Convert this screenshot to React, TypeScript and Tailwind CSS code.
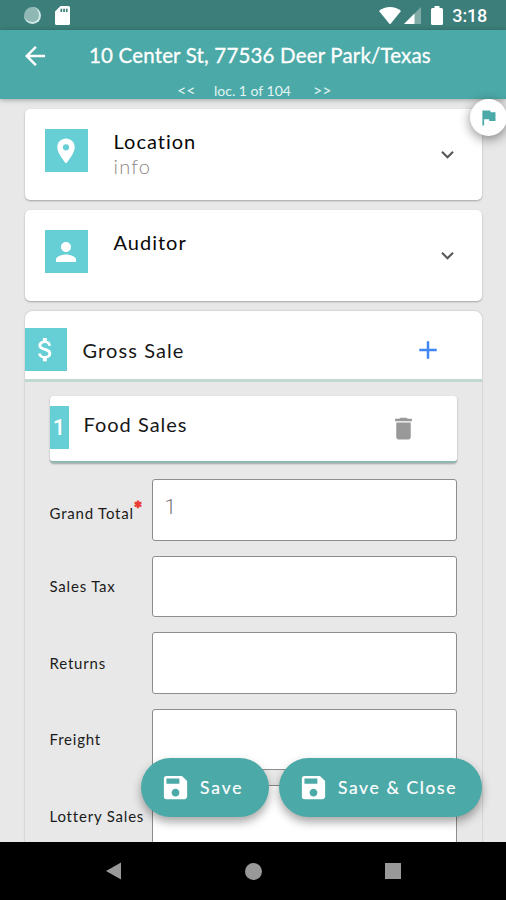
import React from "react";
import {
  MdAdd,
  MdArrowBack,
  MdAttachMoney,
  MdDelete,
  MdExpandMore,
  MdFlag,
  MdLocationOn,
  MdPerson,
  MdSave,
} from "react-icons/md";

function StatusBar() {
  return (
    <div className="flex h-[30px] shrink-0 items-center bg-[#3c7e79] pl-[24px] pr-[19px] text-white">
      <div className="h-[17px] w-[17px] rounded-full border-r-2 border-b-2 border-[#cfe9e8] bg-[#8fb7b4]" />
      <svg className="ml-[14px] h-[19px] w-[15px]" viewBox="0 0 15 19" fill="currentColor">
        <path
          fillRule="evenodd"
          d="M5.5 0H13.5A1.5 1.5 0 0 1 15 1.500V17.500A1.500 1.500 0 0 1 13.500 19H1.500A1.500 1.500 0 0 1 0 17.500V5.500ZM5.500 2.800V6H7.200V2.800ZM8.200 2.800V6H9.900V2.800ZM10.900 2.800V6H12.600V2.800Z"
        />
      </svg>
      <div className="flex-1" />
      <svg className="h-[17px] w-[22px]" viewBox="0 0 22 17" fill="currentColor">
        <path d="M0 4C6-1.300 16-1.300 22 4L11 17.500Z" />
      </svg>
      <svg className="ml-[3px] h-[17px] w-[17px]" viewBox="0 0 17 17" fill="currentColor">
        <path d="M17 0V17H0Z" opacity=".35" />
        <path d="M10.500 6.500V17H0Z" />
      </svg>
      <svg className="ml-[10px] h-[19px] w-[12px]" viewBox="0 0 12 19" fill="currentColor">
        <path d="M3.500 0H8.500V2H10.500Q12 2 12 3.500V17.500Q12 19 10.500 19H1.500Q0 19 0 17.500V3.500Q0 2 1.500 2H3.500Z" />
      </svg>
      <span className="ml-[9px] pt-px font-['Roboto',sans-serif] text-[18px] leading-none font-medium tracking-[-0.2px]">
        3:18
      </span>
    </div>
  );
}

function Header() {
  return (
    <header className="relative z-10 flex h-[69px] shrink-0 flex-col bg-[#4ba9a7] text-white shadow-[0_1px_5px_rgba(0,0,0,0.3)]">
      <div className="flex h-[51px] items-center pl-[20px]">
        <MdArrowBack className="h-[30px] w-[30px]" />
        <h1 className="ml-[39px] text-[20.500px] whitespace-nowrap tracking-[0.170px] [-webkit-text-stroke:0.3px_white]">
          10 Center St, 77536 Deer Park/Texas
        </h1>
      </div>
      <div className="flex h-[18px] items-center pl-[177px] text-[14px] leading-none whitespace-nowrap text-[#e2f5f4]">
        <span className="w-[37px] text-[16px]">&lt;&lt;</span>
        <span className="w-[99px] pt-px">loc. 1 of 104</span>
        <span className="text-[16px]">&gt;&gt;</span>
      </div>
      <button className="absolute top-[69px] left-[470px] flex h-[37px] w-[37px] items-center justify-center rounded-full bg-white text-[#4ba9a7] shadow-[0_3px_12px_rgba(0,0,0,0.45)]">
        <MdFlag className="mr-[1px] h-[21px] w-[21px]" />
      </button>
    </header>
  );
}

function SectionCard({ icon, title, subtitle }: { icon: React.ReactNode; title: string; subtitle?: string }) {
  return (
    <section className="flex h-[91px] shrink-0 rounded-[5px] bg-white pl-[20px] shadow-[0_1px_2px_rgba(0,0,0,0.3)]">
      <div className="mt-[20.500px] flex h-[43px] w-[43px] items-center justify-center bg-[#66ced5] text-white">{icon}</div>
      <div className="mt-[20px] ml-[26px] flex-1">
        <h2 className="text-[20px] leading-[25px] tracking-[1px] text-[#080808]">{title}</h2>
        {subtitle && <p className="text-[20px] leading-[24px] font-light tracking-[1.200px] text-[#8d8585]">{subtitle}</p>}
      </div>
      <MdExpandMore className="mt-[33px] mr-[22px] h-[25px] w-[25px] text-[#585858]" />
    </section>
  );
}

function Field({ label, value = "", required = false }: { label: string; value?: string; required?: boolean }) {
  return (
    <div className="flex h-[61.500px] shrink-0 items-center">
      <label
        className={`flex w-[102px] shrink-0 text-[15px] whitespace-nowrap tracking-[0.8px] text-[#1b1b1b] ${required ? "pt-[7px]" : ""}`}
      >
        {label}
        {required && (
          <span className="mt-[-4px] h-[12px] text-[19px] leading-none font-black text-[#ee3b35] [-webkit-text-stroke:1px_#ee3b35]">
            *
          </span>
        )}
      </label>
      <input
        defaultValue={value}
        className="h-full w-[306px] rounded-[3px] border border-[#8d8d8d] bg-white px-[12px] pb-[6px] font-['Roboto',sans-serif] text-[21px] font-light text-[#777]"
      />
    </div>
  );
}

function ActionButton({ label, className }: { label: string; className: string }) {
  return (
    <button
      className={`flex h-[59px] items-center rounded-full bg-[#4ba9a7] pl-[19px] text-[17.500px] whitespace-nowrap text-white shadow-[0_5px_10px_rgba(0,0,0,0.35)] [-webkit-text-stroke:0.2px_white] ${className}`}
    >
      <MdSave className="mr-[9px] h-[31px] w-[31px]" stroke="none" />
      <span className="pt-px">{label}</span>
    </button>
  );
}

function SystemNav() {
  return (
    <nav className="relative z-20 flex h-[58px] shrink-0 items-center bg-black pl-[106px] text-[#999]">
      <svg className="h-[18px] w-[15px]" viewBox="0 0 15 18" fill="currentColor">
        <path d="M15 .5V17.500L0 9Z" />
      </svg>
      <div className="ml-[124px] h-[17px] w-[17px] rounded-full bg-[#999]" />
      <div className="ml-[123px] h-[16px] w-[16px] bg-[#999]" />
    </nav>
  );
}

export default function App() {
  return (
    <div className="relative flex h-[900px] w-[506px] flex-col overflow-hidden bg-[#e8e8e8] font-['Lato',sans-serif]">
      <StatusBar />
      <Header />
      <main className="flex min-h-0 flex-1 flex-col gap-[10px] overflow-hidden px-[24.500px] pt-[9.500px]">
        <SectionCard icon={<MdLocationOn className="h-[30px] w-[30px]" />} title="Location" subtitle="info" />
        <SectionCard icon={<MdPerson className="h-[30px] w-[30px]" />} title="Auditor" />
        <section className="h-[600px] shrink-0 rounded-[8px] shadow-[0_0_2px_rgba(0,0,0,0.28)]">
          <div className="flex h-[71px] items-center rounded-t-[8px] border-b-[3px] border-[#c1d8d2] bg-white pt-[10px]">
            <div className="flex h-[43px] w-[42px] items-center justify-center bg-[#66ced5] text-white">
              <MdAttachMoney className="h-[31px] w-[31px]" />
            </div>
            <h2 className="ml-[16px] flex-1 text-[20px] tracking-[1.100px] text-[#181818]">Gross Sale</h2>
            <MdAdd className="mr-[39px] h-[30px] w-[30px] text-[#4285f4]" />
          </div>
          <div className="flex flex-col gap-[15px] px-[25px] pt-[14px]">
            <div className="mb-[1.500px] flex h-[67px] shrink-0 rounded-[4px] border-b-2 border-[#8db9b1] bg-white shadow-[0_1px_2px_rgba(0,0,0,0.3)]">
              <div className="mt-[10px] flex h-[43px] w-[19px] items-center justify-center bg-[#66ced5] font-['Roboto',sans-serif] text-[22px] font-medium text-white">
                1
              </div>
              <h3 className="mt-[14px] ml-[15px] flex-1 text-[20px] leading-[28px] tracking-[1px] text-[#181818]">
                Food Sales
              </h3>
              <MdDelete className="mt-[18px] mr-[39px] h-[29px] w-[29px] text-[#999]" />
            </div>
            <Field label="Grand Total" value="1" required />
            <Field label="Sales Tax" />
            <Field label="Returns" />
            <Field label="Freight" />
            <Field label="Lottery Sales" />
          </div>
        </section>
      </main>
      <div className="absolute top-[758px] left-[141px] z-10 flex gap-[10px]">
        <ActionButton label="Save" className="w-[128px] tracking-[1.900px]" />
        <ActionButton label="Save &amp; Close" className="w-[203px] tracking-[1.600px]" />
      </div>
      <SystemNav />
    </div>
  );
}
